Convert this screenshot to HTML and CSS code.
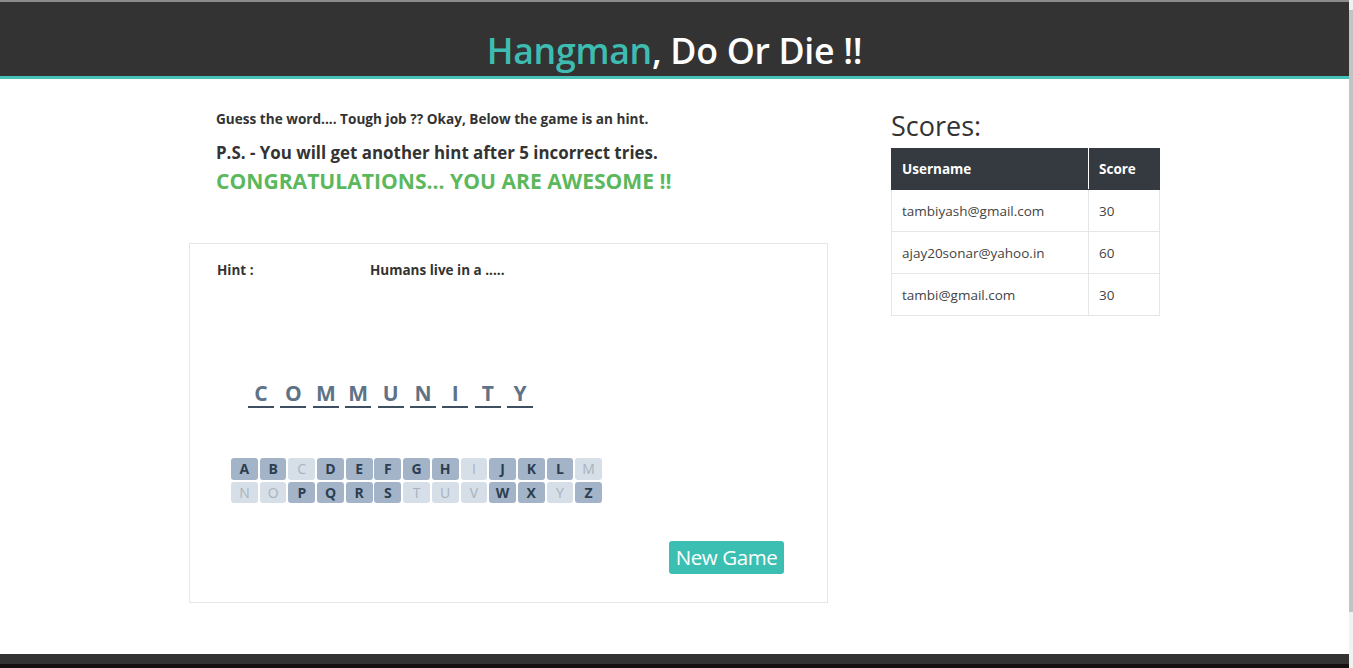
FILE: index.html
```html
<!DOCTYPE html>
<html lang="en">
<head>
<meta charset="utf-8">
<title>Hangman, Do Or Die !!</title>
<link rel="stylesheet" href="styles.css">
</head>
<body>
<div class="shell">
  <div class="page">
    <header class="topbar">
      <h1 class="title"><span class="brand">Hangman</span>, Do Or Die !!</h1>
    </header>
    <main class="main">
      <section class="game-col">
        <p class="intro">Guess the word.... Tough job ?? Okay, Below the game is an hint.</p>
        <p class="ps">P.S. - You will get another hint after 5 incorrect tries.</p>
        <p class="win">CONGRATULATIONS... YOU ARE AWESOME !!</p>
        <div class="card">
          <div class="hint-row">
            <span class="hint-label">Hint :</span>
            <span class="hint-text">Humans live in a .....</span>
          </div>
          <div class="word">
            <span class="slot">C</span><span class="slot">O</span><span class="slot">M</span><span class="slot">M</span><span class="slot">U</span><span class="slot">N</span><span class="slot">I</span><span class="slot">T</span><span class="slot">Y</span>
          </div>
          <div class="keys">
            <span class="key">A</span><span class="key">B</span><span class="key used">C</span><span class="key">D</span><span class="key">E</span><span class="key">F</span><span class="key">G</span><span class="key">H</span><span class="key used">I</span><span class="key">J</span><span class="key">K</span><span class="key">L</span><span class="key used">M</span>
            <span class="key used">N</span><span class="key used">O</span><span class="key">P</span><span class="key">Q</span><span class="key">R</span><span class="key">S</span><span class="key used">T</span><span class="key used">U</span><span class="key used">V</span><span class="key">W</span><span class="key">X</span><span class="key used">Y</span><span class="key">Z</span>
          </div>
          <div class="actions">
            <button class="new-game">New Game</button>
          </div>
        </div>
      </section>
      <aside class="score-col">
        <h2 class="scores-title">Scores:</h2>
        <table class="scores">
          <thead>
            <tr><th class="c-user">Username</th><th class="c-score">Score</th></tr>
          </thead>
          <tbody>
            <tr><td>tambiyash@gmail.com</td><td>30</td></tr>
            <tr><td>ajay20sonar@yahoo.in</td><td>60</td></tr>
            <tr><td>tambi@gmail.com</td><td>30</td></tr>
          </tbody>
        </table>
      </aside>
    </main>
    <footer class="footer"><div class="footer-strip"></div></footer>
  </div>
  <div class="scrollbar"><div class="thumb"></div></div>
</div>
</body>
</html>
```
FILE: styles.css
```css
* { box-sizing: border-box; }
html, body { margin: 0; padding: 0; }
body {
  font-family: "Open Sans", "Noto Sans", sans-serif;
  color: #333;
  background: #fff;
  overflow: hidden;
}
.shell { display: flex; height: 668px; }
.page { flex: 1; display: flex; flex-direction: column; min-width: 0; }
.scrollbar {
  width: 4px;
  background: #f1f1f1;
  padding-top: 10px;
}
.thumb { height: 602px; background: #c3c3c3; }

.topbar {
  height: 79px;
  background: #333;
  border-top: 2px solid #8c8c8c;
  border-bottom: 3px solid #46c2b8;
  display: flex;
  align-items: flex-end;
  justify-content: center;
}
.title {
  margin: 0 0 2px;
  font-size: 35.7px;
  font-weight: 600;
  line-height: 48px;
  color: #fff;
  letter-spacing: -0.3px;
}
.brand { color: #3dbdb1; }

.main {
  height: 575px;
  display: flex;
  padding-left: 189px;
}
.game-col { width: 639px; padding-top: 30px; }
.intro {
  margin: 0 0 12px 27px;
  font-size: 13.6px;
  font-weight: 700;
  line-height: 20px;
}
.ps {
  margin: 0 0 2px 27px;
  font-size: 16.9px;
  font-weight: 700;
  line-height: 24px;
}
.win {
  margin: 0 0 0 27px;
  font-size: 21.1px;
  font-weight: 700;
  line-height: 27px;
  color: #5cb85c;
}
.card {
  margin-top: 49px;
  border: 1px solid #e6e6e6;
  padding: 16px 0 28px 27px;
  display: flex;
  flex-direction: column;
}
.hint-row {
  display: flex;
  font-size: 13.5px;
  font-weight: 700;
  line-height: 20px;
}
.hint-label { width: 153px; }
.word {
  display: flex;
  gap: 6.4px;
  margin: 100px 0 0 31px;
}
.slot {
  width: 26px;
  height: 28px;
  border-bottom: 2px solid #3d4f61;
  text-align: center;
  font-size: 21px;
  font-weight: 700;
  line-height: 26px;
  color: #5f7386;
}
.keys {
  margin: 50px 0 0 14px;
  width: 373px;
  display: grid;
  grid-template-columns: repeat(13, 26.8px);
  column-gap: 1.9px;
  row-gap: 2px;
}
.key {
  height: 21.5px;
  border-radius: 3px;
  background: #a4b4c8;
  color: #2c3e50;
  font-size: 14px;
  font-weight: 700;
  line-height: 21.5px;
  text-align: center;
}
.key.used { background: #d6dee7; color: #a8b3be; font-weight: 400; }
.actions {
  display: flex;
  justify-content: flex-end;
  margin-top: 38px;
  padding-right: 43px;
}
.new-game {
  height: 33px;
  width: 115px;
  padding: 0;
  border: none;
  border-radius: 3px;
  background: #3bbfb3;
  color: #fff;
  font-family: "Open Sans", "Noto Sans", sans-serif;
  font-size: 20.5px;
  line-height: 33px;
  letter-spacing: -0.4px;
}

.score-col { margin-left: 63px; width: 269px; padding-top: 29px; }
.scores-title {
  margin: 0 0 5px;
  font-size: 27px;
  font-weight: 400;
  line-height: 35px;
  color: #333;
}
.scores {
  width: 269px;
  border-collapse: collapse;
  font-size: 13.5px;
}
.scores th {
  background: #343a40;
  color: #fff;
  font-weight: 700;
  text-align: left;
  height: 41px;
  padding: 0 10px;
  border: 1px solid #343a40;
  border-right-color: #fff;
}
.scores th:last-child { border-right-color: #343a40; }
.scores .c-user { width: 197px; }
.scores td {
  height: 42px;
  padding: 0 10px;
  border: 1px solid #e4e6e8;
  color: #444;
}

.footer {
  margin-top: auto;
  height: 14px;
  background: #333;
  display: flex;
  flex-direction: column;
  justify-content: flex-end;
}
.footer-strip { height: 4px; background: #141010; }
```
